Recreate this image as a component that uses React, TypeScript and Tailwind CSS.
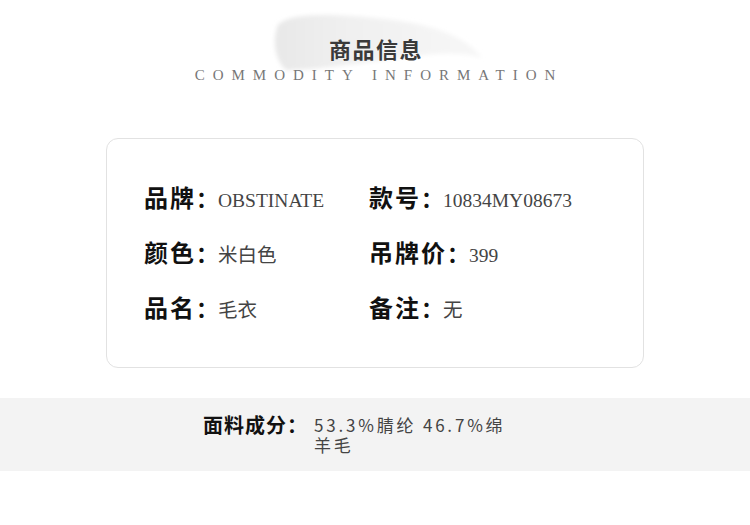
import React from 'react'

const rows = [
  [['品牌', 'OBSTINATE'], ['款号', '10834MY08673']],
  [['颜色', '米白色'], ['吊牌价', '399']],
  [['品名', '毛衣'], ['备注', '无']],
]

const sans = "font-['Noto_Sans_CJK_SC','Noto_Sans',sans-serif]"
const serif = "font-['Liberation_Serif','Noto_Sans_CJK_SC',serif]"

function Brush() {
  return (
    <svg width="240" height="80" viewBox="0 0 240 80" className="absolute left-[260px] top-0">
      <defs>
        <filter id="b" x="-20%" y="-50%" width="140%" height="200%">
          <feGaussianBlur stdDeviation="2" />
        </filter>
        <linearGradient id="g" x1="0" x2="1">
          <stop offset="0" stopColor="#e8e8e8" />
          <stop offset="0.35" stopColor="#f0f0f0" />
          <stop offset="1" stopColor="#f7f7f7" />
        </linearGradient>
      </defs>
      <path d="M18 25 C 30 12, 80 13, 140 21 C 180 27, 210 40, 222 58 C 195 50, 165 54, 125 60 C 90 65, 50 70, 26 70 C 15 60, 12 40, 18 25 Z" fill="url(#g)" filter="url(#b)" />
    </svg>
  )
}

export default function App() {
  return (
    <div className="w-[750px] h-[525px] bg-white relative">
      <div className="relative h-[110px]">
        <Brush />
        <div className="relative pt-[33px] flex flex-col items-center">
          <h1 className={`${sans} text-[22px] leading-[30px] font-bold text-[#3a3a3a] tracking-[1.5px] pl-[2px]`}>商品信息</h1>
          <p className={`${serif} text-[15px] leading-[18px] text-[#777] tracking-[8px] pl-[8px] mt-[3px]`}>COMMODITY INFORMATION</p>
        </div>
      </div>

      <div className="mx-[106px] mt-[28px] h-[230px] border border-[#e2e2e2] rounded-[12px] pl-[37px] pt-[42px]">
        {rows.map((row, i) => (
          <div key={i} className="flex h-[55px]">
            {row.map(([label, value]) => (
              <div key={label} className="flex items-baseline w-[225px]">
                <span className={`${sans} text-[24px] leading-[32px] font-bold text-[#111] tracking-[2px]`}>{label}</span>
                <span className={`${sans} text-[22px] leading-[32px] font-bold text-[#111]`}>：</span>
                <span className={`${serif} text-[19.5px] leading-[32px] text-[#444]`}>{value}</span>
              </div>
            ))}
          </div>
        ))}
      </div>

      <div className="mt-[30px] h-[73px] bg-[#f3f3f3] flex pl-[203px] pt-[13px]">
        <span className={`${sans} text-[20px] leading-[28px] font-bold text-[#111] whitespace-nowrap tracking-[1px]`}>面料成分：</span>
        <span className={`${sans} text-[17px] leading-[20px] mt-[4px] text-[#444] tracking-[2.8px] w-[200px] ml-[6px]`}>53.3%腈纶 46.7%绵羊毛</span>
      </div>
    </div>
  )
}
